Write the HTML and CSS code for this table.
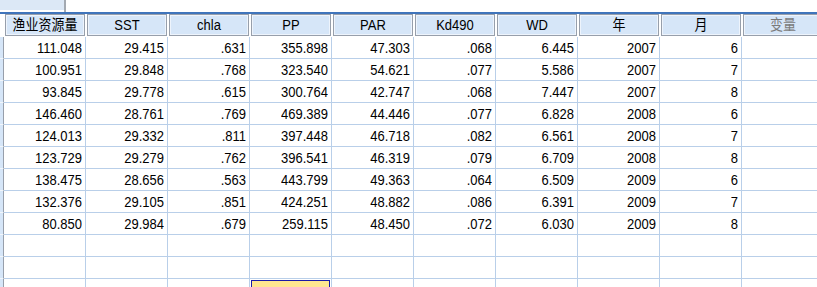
FILE: index.html
```html
<!DOCTYPE html>
<html lang="zh-CN">
<head>
    <meta charset="UTF-8">
    <title>数据视图</title>
    <link rel="stylesheet" href="styles.css">
</head>
<body>
    <div class="topbar">
        <div class="cellref"></div>
        <div class="cellsep"></div>
    </div>
    <div class="grid-wrap">
        <table class="grid">
            <colgroup>
                <col class="col-stub">
                <col class="col"><col class="col"><col class="col"><col class="col"><col class="col">
                <col class="col"><col class="col"><col class="col"><col class="col"><col class="col">
            </colgroup>
            <thead>
                <tr>
                    <th class="corner"></th>
                    <th><div class="hd"><span class="t">渔业资源量</span></div></th>
                    <th><div class="hd"><span class="t">SST</span></div></th>
                    <th><div class="hd"><span class="t">chla</span></div></th>
                    <th><div class="hd"><span class="t">PP</span></div></th>
                    <th><div class="hd"><span class="t">PAR</span></div></th>
                    <th><div class="hd"><span class="t">Kd490</span></div></th>
                    <th><div class="hd"><span class="t">WD</span></div></th>
                    <th><div class="hd"><span class="t">年</span></div></th>
                    <th><div class="hd"><span class="t">月</span></div></th>
                    <th><div class="hd hd-empty"><span class="t">变量</span></div></th>
                </tr>
            </thead>
            <tbody>
                <tr>
                    <td class="rh"></td>
                    <td><span class="t">111.048</span></td><td><span class="t">29.415</span></td><td><span class="t">.631</span></td>
                    <td><span class="t">355.898</span></td><td><span class="t">47.303</span></td><td><span class="t">.068</span></td>
                    <td><span class="t">6.445</span></td><td><span class="t">2007</span></td><td><span class="t">6</span></td><td></td>
                </tr>
                <tr>
                    <td class="rh"></td>
                    <td><span class="t">100.951</span></td><td><span class="t">29.848</span></td><td><span class="t">.768</span></td>
                    <td><span class="t">323.540</span></td><td><span class="t">54.621</span></td><td><span class="t">.077</span></td>
                    <td><span class="t">5.586</span></td><td><span class="t">2007</span></td><td><span class="t">7</span></td><td></td>
                </tr>
                <tr>
                    <td class="rh"></td>
                    <td><span class="t">93.845</span></td><td><span class="t">29.778</span></td><td><span class="t">.615</span></td>
                    <td><span class="t">300.764</span></td><td><span class="t">42.747</span></td><td><span class="t">.068</span></td>
                    <td><span class="t">7.447</span></td><td><span class="t">2007</span></td><td><span class="t">8</span></td><td></td>
                </tr>
                <tr>
                    <td class="rh"></td>
                    <td><span class="t">146.460</span></td><td><span class="t">28.761</span></td><td><span class="t">.769</span></td>
                    <td><span class="t">469.389</span></td><td><span class="t">44.446</span></td><td><span class="t">.077</span></td>
                    <td><span class="t">6.828</span></td><td><span class="t">2008</span></td><td><span class="t">6</span></td><td></td>
                </tr>
                <tr>
                    <td class="rh"></td>
                    <td><span class="t">124.013</span></td><td><span class="t">29.332</span></td><td><span class="t">.811</span></td>
                    <td><span class="t">397.448</span></td><td><span class="t">46.718</span></td><td><span class="t">.082</span></td>
                    <td><span class="t">6.561</span></td><td><span class="t">2008</span></td><td><span class="t">7</span></td><td></td>
                </tr>
                <tr>
                    <td class="rh"></td>
                    <td><span class="t">123.729</span></td><td><span class="t">29.279</span></td><td><span class="t">.762</span></td>
                    <td><span class="t">396.541</span></td><td><span class="t">46.319</span></td><td><span class="t">.079</span></td>
                    <td><span class="t">6.709</span></td><td><span class="t">2008</span></td><td><span class="t">8</span></td><td></td>
                </tr>
                <tr>
                    <td class="rh"></td>
                    <td><span class="t">138.475</span></td><td><span class="t">28.656</span></td><td><span class="t">.563</span></td>
                    <td><span class="t">443.799</span></td><td><span class="t">49.363</span></td><td><span class="t">.064</span></td>
                    <td><span class="t">6.509</span></td><td><span class="t">2009</span></td><td><span class="t">6</span></td><td></td>
                </tr>
                <tr>
                    <td class="rh"></td>
                    <td><span class="t">132.376</span></td><td><span class="t">29.105</span></td><td><span class="t">.851</span></td>
                    <td><span class="t">424.251</span></td><td><span class="t">48.882</span></td><td><span class="t">.086</span></td>
                    <td><span class="t">6.391</span></td><td><span class="t">2009</span></td><td><span class="t">7</span></td><td></td>
                </tr>
                <tr>
                    <td class="rh"></td>
                    <td><span class="t">80.850</span></td><td><span class="t">29.984</span></td><td><span class="t">.679</span></td>
                    <td><span class="t">259.115</span></td><td><span class="t">48.450</span></td><td><span class="t">.072</span></td>
                    <td><span class="t">6.030</span></td><td><span class="t">2009</span></td><td><span class="t">8</span></td><td></td>
                </tr>
                <tr>
                    <td class="rh"></td>
                    <td></td><td></td><td></td><td></td><td></td><td></td><td></td><td></td><td></td><td></td>
                </tr>
                <tr>
                    <td class="rh"></td>
                    <td></td><td></td><td></td><td></td><td></td><td></td><td></td><td></td><td></td><td></td>
                </tr>
                <tr>
                    <td class="rh"></td>
                    <td></td><td></td><td></td><td class="active"></td><td></td><td></td><td></td><td></td><td></td><td></td>
                </tr>
            </tbody>
        </table>
    </div>
</body>
</html>
```

FILE: styles.css
```css
* {
    margin: 0;
    padding: 0;
    box-sizing: border-box;
}

html, body {
    height: 100%;
}

body {
    background: #fff;
    color: #000;
    font-family: 'Liberation Sans', Arial, 'Noto Sans CJK SC', sans-serif;
    font-size: 13px;
    overflow: hidden;
}

/* strip above the grid */
.topbar {
    display: flex;
    height: 12px;
    border-bottom: 2px solid #3f74bb;
    box-sizing: content-box;
}

.cellref {
    width: 64px;
    height: 10px;
    background: #dce8f6;
}

.cellsep {
    width: 2px;
    height: 12px;
    background: #a3a9b1;
}

.grid-wrap {
    width: 100%;
    overflow: hidden;
}

.grid {
    table-layout: fixed;
    border-collapse: separate;
    border-spacing: 0;
    width: 824px;
}

.col-stub {
    width: 4px;
}

.col {
    width: 82px;
}

/* header row */
.grid th {
    height: 23px;
    padding: 0 1px 1px 1px;
    vertical-align: top;
    font-weight: normal;
}

.grid th.corner {
    padding: 0;
}

.hd {
    height: 22px;
    border: 1px solid #979fab;
    box-shadow: inset 0 0 0 1px #eef4fc;
    background: #d6e6f8;
    text-align: center;
    line-height: 20px;
    white-space: nowrap;
    overflow: hidden;
}

.hd-empty {
    color: #7b7b7b;
}

/* data cells */
.grid td {
    height: 22px;
    padding: 0 3px;
    border-right: 1px solid #b9cfe9;
    border-bottom: 1px solid #b9cfe9;
    text-align: right;
    line-height: 21px;
    white-space: nowrap;
    overflow: hidden;
}

.grid td.rh {
    padding: 0;
    background: #d6e6f8;
    border-right: 1px solid #979fab;
    border-bottom: 1px solid #f2f6fb;
}

.grid td.active {
    background: #ffe68f;
    box-shadow: inset 0 0 0 1px #fff, inset 0 0 0 2px #1a1aa6;
}

/* the grid font is drawn tall and narrow */
.t {
    display: inline-block;
    transform: scaleY(1.18);
}
```
